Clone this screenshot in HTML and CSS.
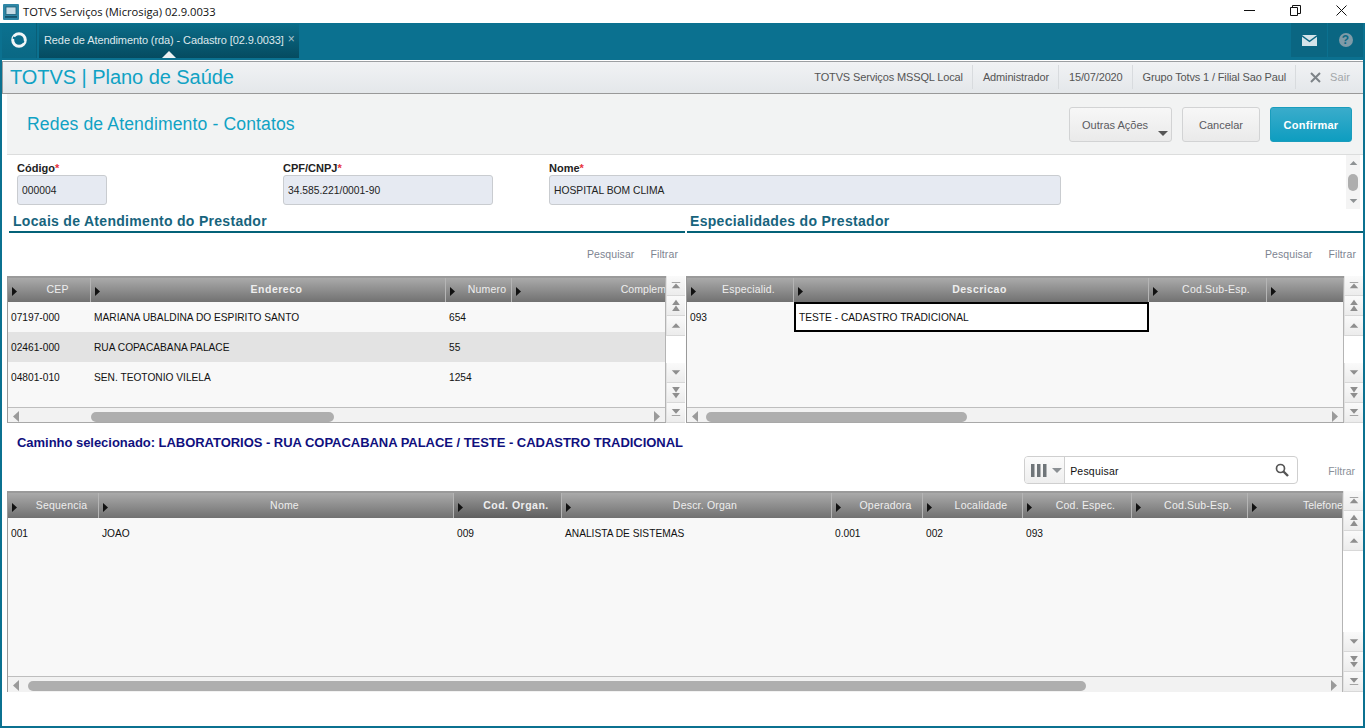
FILE: index.html
```html
<!DOCTYPE html>
<html lang="pt-BR">
<head>
<meta charset="utf-8">
<title>TOTVS Serviços (Microsiga) 02.9.0033</title>
<link rel="stylesheet" href="styles.css">
</head>
<body>
<svg class="defs" width="0" height="0" aria-hidden="true">
  <symbol id="first" viewBox="0 0 13 11"><path d="M1 1h11v1H1z"/><path d="M6.500 3L12 9H1z"/></symbol>
  <symbol id="pgup" viewBox="0 0 13 16"><path d="M6.500 .5L11.500 7.500h-10z"/><path d="M6.500 8L11.500 15h-10z"/></symbol>
  <symbol id="up" viewBox="0 0 13 8"><path d="M6.500 1L12 7H1z"/></symbol>
  <symbol id="down" viewBox="0 0 13 8"><path d="M1 1h11L6.500 7z"/></symbol>
  <symbol id="pgdn" viewBox="0 0 13 16"><path d="M1.500 1h10L6.500 8z"/><path d="M1.500 8.500h10L6.500 15.500z"/></symbol>
  <symbol id="last" viewBox="0 0 13 11"><path d="M1 1h11L6.500 7z"/><path d="M1 9h11v1H1z"/></symbol>
  <symbol id="left" viewBox="0 0 8 13"><path d="M7 1v11L1 6.500z"/></symbol>
  <symbol id="right" viewBox="0 0 8 13"><path d="M1 1v11l6-5.500z"/></symbol>
  <symbol id="mark" viewBox="0 0 7 11"><path d="M1 1l5 4.500L1 10z"/></symbol>
</svg>

<div class="titlebar">
  <svg class="app-icon" viewBox="0 0 16 16" width="16" height="16"><rect x="0" y="0" width="16" height="16" rx="1" fill="#2f87a6"/><rect x="3" y="3" width="10" height="7.500" fill="#c5dbe5" stroke="#1d5f78" stroke-width=".8"/><rect x="2" y="12" width="12" height="1.800" fill="#17536b"/></svg>
  <span class="title-text">TOTVS Serviços (Microsiga) 02.9.0033</span>
  <div class="win-controls">
    <svg width="46" height="23" viewBox="0 0 46 23"><path d="M17 10.500h11" stroke="#111" fill="none"/></svg>
    <svg width="46" height="23" viewBox="0 0 46 23"><path d="M17.500 7.500h7v8h-7zM19.500 7.500v-2h8v8h-3" stroke="#111" fill="none"/></svg>
    <svg width="46" height="23" viewBox="0 0 46 23"><path d="M17.500 5.500l10 10M27.500 5.500l-10 10" stroke="#111" fill="none"/></svg>
  </div>
</div>

<div class="frame">
  <div class="appbar">
    <div class="logo-cell">
      <svg width="18" height="18" viewBox="0 0 18 18"><circle cx="9" cy="9" r="6.300" fill="none" stroke="#f2f6f8" stroke-width="3"/><path d="M3 6.500L14 11" stroke="#0a6f8e" stroke-width="2.200"/></svg>
    </div>
    <div class="tab">
      <span class="tab-text">Rede de Atendimento (rda) - Cadastro [02.9.0033]</span>
      <span class="tab-close">×</span>
      <span class="tab-caret"></span>
    </div>
    <div class="bar-spacer"></div>
    <div class="bar-icon">
      <svg width="15" height="11" viewBox="0 0 15 11"><path d="M0 0h15L7.500 5.500z" fill="#d4e4ea"/><path d="M0 1.800v9.200h15V1.800L7.500 7.300z" fill="#d4e4ea"/></svg>
    </div>
    <div class="bar-icon help-cell"><span class="help">?</span></div>
  </div>

  <header class="topbar">
    <div class="brand">TOTVS | Plano de Saúde</div>
    <div class="topinfo">
      <span class="info first-info">TOTVS Serviços MSSQL Local</span>
      <span class="info">Administrador</span>
      <span class="info">15/07/2020</span>
      <span class="info">Grupo Totvs 1 / Filial Sao Paul</span>
      <span class="info exit">
        <svg width="11" height="11" viewBox="0 0 11 11"><path d="M1 1l9 9M10 1l-9 9" stroke="#7d8388" stroke-width="2" fill="none"/></svg>
        <span class="exit-text">Sair</span>
      </span>
    </div>
  </header>

  <main class="main">
    <div class="pagehead">
      <h1 class="pagetitle">Redes de Atendimento - Contatos</h1>
      <div class="actions">
        <button class="btn btn-more">Outras Ações<span class="btn-caret"></span></button>
        <button class="btn btn-cancel">Cancelar</button>
        <button class="btn btn-primary">Confirmar</button>
      </div>
    </div>

    <form class="form">
      <div class="fields">
        <div class="field f-code"><label class="lbl">Código<i>*</i></label><div class="input">000004</div></div>
        <div class="field f-cnpj"><label class="lbl">CPF/CNPJ<i>*</i></label><div class="input">34.585.221/0001-90</div></div>
        <div class="field f-name"><label class="lbl">Nome<i>*</i></label><div class="input">HOSPITAL BOM CLIMA</div></div>
      </div>
      <div class="form-scroll">
        <svg class="tri"><use href="#up"/></svg>
        <span class="form-thumb"></span>
        <svg class="tri"><use href="#down"/></svg>
      </div>
    </form>

    <div class="panels">
      <section class="panel panel-l">
        <h2 class="sec-title">Locais de Atendimento do Prestador</h2>
        <div class="links"><span>Pesquisar</span><span>Filtrar</span></div>
        <div class="grid grid-l">
          <div class="g-main">
            <div class="g-head cols-l">
              <div class="th ctr"><svg class="mk"><use href="#mark"/></svg>CEP</div>
              <div class="th ctr strong"><svg class="mk"><use href="#mark"/></svg>Endereco</div>
              <div class="th ctr"><svg class="mk"><use href="#mark"/></svg>Numero</div>
              <div class="th end"><svg class="mk"><use href="#mark"/></svg>Complem</div>
            </div>
            <div class="g-body">
              <div class="tr cols-l"><div class="td">07197-000</div><div class="td">MARIANA UBALDINA DO ESPIRITO SANTO</div><div class="td">654</div><div class="td"></div></div>
              <div class="tr cols-l alt"><div class="td">02461-000</div><div class="td">RUA COPACABANA PALACE</div><div class="td">55</div><div class="td"></div></div>
              <div class="tr cols-l"><div class="td">04801-010</div><div class="td">SEN. TEOTONIO VILELA</div><div class="td">1254</div><div class="td"></div></div>
            </div>
            <div class="hscroll">
              <svg class="arr" width="8" height="13"><use href="#left"/></svg>
              <div class="h-track"><span class="h-thumb thumb-l"></span></div>
              <svg class="arr" width="8" height="13"><use href="#right"/></svg>
            </div>
          </div>
          <div class="vscroll">
            <div class="vbtn"><svg><use href="#first"/></svg></div>
            <div class="vbtn"><svg><use href="#pgup"/></svg></div>
            <div class="vbtn"><svg><use href="#up"/></svg></div>
            <div class="vgap"></div>
            <div class="vbtn"><svg><use href="#down"/></svg></div>
            <div class="vbtn"><svg><use href="#pgdn"/></svg></div>
            <div class="vbtn"><svg><use href="#last"/></svg></div>
          </div>
        </div>
      </section>

      <section class="panel panel-r">
        <h2 class="sec-title">Especialidades do Prestador</h2>
        <div class="links"><span>Pesquisar</span><span>Filtrar</span></div>
        <div class="grid grid-r">
          <div class="g-main">
            <div class="g-head cols-r">
              <div class="th ctr"><svg class="mk"><use href="#mark"/></svg>Especialid.</div>
              <div class="th ctr strong"><svg class="mk"><use href="#mark"/></svg>Descricao</div>
              <div class="th ctr"><svg class="mk"><use href="#mark"/></svg>Cod.Sub-Esp.</div>
              <div class="th"><svg class="mk"><use href="#mark"/></svg></div>
            </div>
            <div class="g-body">
              <div class="tr cols-r"><div class="td">093</div><div class="td selected">TESTE - CADASTRO TRADICIONAL</div><div class="td"></div><div class="td"></div></div>
            </div>
            <div class="hscroll">
              <svg class="arr" width="8" height="13"><use href="#left"/></svg>
              <div class="h-track"><span class="h-thumb thumb-r"></span></div>
              <svg class="arr" width="8" height="13"><use href="#right"/></svg>
            </div>
          </div>
          <div class="vscroll">
            <div class="vbtn"><svg><use href="#first"/></svg></div>
            <div class="vbtn"><svg><use href="#pgup"/></svg></div>
            <div class="vbtn"><svg><use href="#up"/></svg></div>
            <div class="vgap"></div>
            <div class="vbtn"><svg><use href="#down"/></svg></div>
            <div class="vbtn"><svg><use href="#pgdn"/></svg></div>
            <div class="vbtn"><svg><use href="#last"/></svg></div>
          </div>
        </div>
      </section>
    </div>

    <div class="path">Caminho selecionado: LABORATORIOS - RUA COPACABANA PALACE / TESTE - CADASTRO TRADICIONAL</div>

    <div class="searchrow">
      <div class="search">
        <div class="cols-btn">
          <svg width="16" height="13" viewBox="0 0 16 13"><path d="M0 0h3.500v13H0zM6 0h3.500v13H6zM12 0h3.500v13H12z" fill="#6f7579"/></svg>
          <span class="cols-caret"></span>
        </div>
        <span class="search-text">Pesquisar</span>
        <svg class="magnifier" width="14" height="14" viewBox="0 0 14 14"><circle cx="5.500" cy="5.500" r="4" fill="none" stroke="#555" stroke-width="1.700"/><path d="M8.500 8.500l4.500 4.500" stroke="#555" stroke-width="2.400" fill="none"/></svg>
      </div>
      <span class="filter">Filtrar</span>
    </div>

    <div class="grid grid-b">
      <div class="g-main">
        <div class="g-head cols-b">
          <div class="th ctr"><svg class="mk"><use href="#mark"/></svg>Sequencia</div>
          <div class="th ctr"><svg class="mk"><use href="#mark"/></svg>Nome</div>
          <div class="th ctr strong sorted"><svg class="mk"><use href="#mark"/></svg>Cod. Organ.</div>
          <div class="th ctr"><svg class="mk"><use href="#mark"/></svg>Descr. Organ</div>
          <div class="th ctr"><svg class="mk"><use href="#mark"/></svg>Operadora</div>
          <div class="th ctr"><svg class="mk"><use href="#mark"/></svg>Localidade</div>
          <div class="th ctr"><svg class="mk"><use href="#mark"/></svg>Cod. Espec.</div>
          <div class="th ctr"><svg class="mk"><use href="#mark"/></svg>Cod.Sub-Esp.</div>
          <div class="th end"><svg class="mk"><use href="#mark"/></svg>Telefone</div>
        </div>
        <div class="g-body">
          <div class="tr cols-b"><div class="td">001</div><div class="td">JOAO</div><div class="td">009</div><div class="td">ANALISTA DE SISTEMAS</div><div class="td">0.001</div><div class="td">002</div><div class="td">093</div><div class="td"></div><div class="td"></div></div>
        </div>
        <div class="hscroll">
          <svg class="arr" width="8" height="13"><use href="#left"/></svg>
          <div class="h-track"><span class="h-thumb thumb-b"></span></div>
          <svg class="arr" width="8" height="13"><use href="#right"/></svg>
        </div>
      </div>
      <div class="vscroll">
        <div class="vbtn"><svg><use href="#first"/></svg></div>
        <div class="vbtn"><svg><use href="#pgup"/></svg></div>
        <div class="vbtn"><svg><use href="#up"/></svg></div>
        <div class="vgap"></div>
        <div class="vbtn"><svg><use href="#down"/></svg></div>
        <div class="vbtn"><svg><use href="#pgdn"/></svg></div>
        <div class="vbtn"><svg><use href="#last"/></svg></div>
      </div>
    </div>
  </main>
</div>
</body>
</html>
```

FILE: styles.css
```css
* { box-sizing: border-box; }
html, body { margin: 0; padding: 0; background: #fff; }
body {
  width: 1366px;
  height: 728px;
  overflow: hidden;
  font-family: "Liberation Sans", Arial, sans-serif;
  font-size: 11px;
  color: #111;
}
.defs { position: absolute; }

/* window title bar */
.titlebar { height: 23px; display: flex; align-items: center; padding-left: 3px; background: #fff; }
.app-icon { flex: none; }
.title-text { margin-left: 4px; font-family: "Open Sans", sans-serif; font-size: 11.200px; color: #111; }
.win-controls { margin-left: auto; display: flex; margin-right: 1px; }
.win-controls svg { display: block; }

/* frame */
.frame {
  width: 1365px;
  height: 705px;
  border: 2px solid #0b7190;
  border-top: 0;
  display: flex;
  flex-direction: column;
  background: #fff;
}
.appbar { height: 37px; flex: none; background: #0b7190; display: flex; align-items: flex-start; }
.logo-cell {
  width: 35px; height: 35px; display: flex; align-items: center; justify-content: center;
  background: linear-gradient(#0b7190, #0a6884);
  border-right: 1px solid #0a5f78;
  padding-bottom: 1px;
}
.tab {
  position: relative;
  margin-left: 2px; margin-top: 1px;
  width: 260px; height: 34px;
  background: linear-gradient(#0b6c88, #054b60);
  color: #dfe8ec;
  font-size: 11px;
  display: flex; align-items: center;
  padding: 0 0 2px 5px;
  white-space: nowrap;
}
.tab-text { letter-spacing: -0.1px; }
.tab-close { margin-left: 4px; color: #a9c3cd; font-size: 12px; line-height: 10px; padding-bottom: 3px; }
.tab-caret {
  position: absolute; left: 123px; bottom: 0;
  border-left: 7px solid transparent; border-right: 7px solid transparent; border-bottom: 7px solid #eef1f3;
}
.bar-spacer { flex: 1; }
.bar-icon {
  width: 36px; height: 34px; display: flex; align-items: center; justify-content: center;
  background: #0a6682; margin-left: 1px;
}
.help-cell { width: 35px; }
.help {
  width: 14px; height: 14px; border-radius: 50%; background: #7f9ba8; color: #0b6a86;
  font-weight: 700; font-size: 12px; line-height: 14px; text-align: center;
}

/* product header */
.topbar {
  height: 34px; flex: none;
  display: flex; align-items: stretch; justify-content: space-between;
  background: linear-gradient(#f1f3f5, #e4e7ea);
  border-top: 1px solid #fff;
  border-bottom: 1px solid #999;
  box-shadow: inset 0 1px 0 #9c9fa2, inset 1px 0 0 #9c9fa2;
}
.brand { font-size: 20px; color: #10a2c4; line-height: 32px; padding-left: 8px; letter-spacing: -0.05px; }
.topinfo { display: flex; align-items: center; color: #555; font-size: 11px; letter-spacing: -0.14px; height: 30px; margin-top: 1px; }
.info { padding: 0 9px 0 10px; height: 24px; line-height: 24px; border-left: 1px solid #d8dbde; white-space: nowrap; }
.first-info { border-left: 0; }
.exit { display: flex; align-items: center; width: 68px; padding-left: 14px; }
.exit-text { margin-left: 9px; color: #a3a7aa; letter-spacing: .1px; }

/* main */
.main { flex: 1; min-height: 0; padding-left: 5px; display: flex; flex-direction: column; }
.pagehead {
  height: 61px; flex: none;
  background: #f2f3f3; border-bottom: 1px solid #dcdddd;
  display: flex; align-items: flex-start; justify-content: space-between;
  padding: 13px 11px 0 20px;
}
.pagetitle { margin: 7px 0 0; font-size: 17.600px; font-weight: 400; color: #10a2c4; letter-spacing: 0.12px; line-height: 20px; }
.actions { display: flex; gap: 10px; }
.btn {
  height: 35px; border: 1px solid #d2d3d4; border-radius: 3px;
  background: linear-gradient(#f7f7f7, #eaeaea);
  font-family: inherit; font-size: 11px; color: #5a5a60;
  padding: 0; position: relative;
}
.btn-more { width: 103px; text-align: left; padding-left: 12px; }
.btn-caret {
  position: absolute; right: 3px; bottom: 5px;
  border-left: 5px solid transparent; border-right: 5px solid transparent; border-top: 5px solid #555;
}
.btn-cancel { width: 78px; }
.btn-primary {
  width: 82px; border-color: #1a9dbd; color: #fff; font-weight: 700; letter-spacing: .25px;
  background: linear-gradient(#3aaccb, #0e9dc0);
}

/* form */
.form { height: 55px; flex: none; display: flex; justify-content: space-between; padding: 0 3px 0 10px; }
.fields { display: grid; grid-template-columns: 266px 266px 512px; padding-top: 7px; }
.lbl { display: block; font-weight: 700; font-size: 11px; line-height: 13px; height: 13px; color: #222; }
.lbl i { color: #e8323c; font-style: normal; }
.input {
  height: 30px; line-height: 28px; padding: 1px 0 0 4px;
  background: #e6eaf2; border: 1px solid #c9ccd0; border-radius: 3px; color: #222; font-size: 10.300px;
}
.f-code .input { width: 90px; }
.f-cnpj .input { width: 210px; }
.f-name .input { width: 512px; }
.form-scroll {
  width: 14px; height: 54px; background: #f4f4f4;
  display: flex; flex-direction: column; align-items: center; justify-content: space-between;
  padding: 5px 0;
}
.form-thumb { width: 10px; height: 17px; border-radius: 5px; background: #aeaeae; margin-top: 1px; }
.tri { fill: #8e9294; display: block; width: 9px; height: 6px; }

/* panels */
.panels { display: grid; grid-template-columns: 679px 677px; flex: none; }
.panel { min-width: 0; }
.sec-title {
  margin: 0 0 0 2px; height: 23px; padding: 3px 0 0 4px;
  border-bottom: 2px solid #046278;
  font-size: 14px; line-height: 16px; color: #17647d; font-weight: 700; letter-spacing: 0.3px;
}
.panel-l .sec-title { margin-right: 1px; }
.panel-r .sec-title { margin: 0 0 0 1px; padding-left: 3px; }
.links {
  height: 43px; display: flex; justify-content: flex-end; align-items: center; gap: 16px;
  padding-right: 8px; padding-bottom: 1px; color: #7d8491; font-size: 10.500px; letter-spacing: .1px;
}
.panel-r .links { padding-right: 7px; }

/* data grids */
.grid { display: grid; border-top: 2px solid #9a9a9a; border-left: 1px solid #9a9a9a; border-bottom: 1px solid #a8a8a8; }
.grid-l { grid-template-columns: 658px 19px; height: 147px; width: 678px; }
.grid-r { grid-template-columns: 657px 19px; height: 147px; }
.grid-b { grid-template-columns: 1335px 20px; height: 201px; width: 1356px; border-bottom: 0; }
.g-main { min-width: 0; min-height: 0; display: flex; flex-direction: column; border-right: 1px solid #b4b4b4; overflow: hidden; }
.g-head {
  height: 24px; flex: none; display: grid;
  background: linear-gradient(#aaa, #717171);
  color: #eee; font-size: 10.500px; letter-spacing: .2px;
}
.grid-b .g-head { height: 25px; }
.grid-b .th { line-height: 25px; }
.grid-b .mk { top: 9px; }
.cols-l { grid-template-columns: 83px 355px 66px 154px; }
.cols-r { grid-template-columns: 107px 355px 118px 77px; }
.cols-b { grid-template-columns: 91px 355px 108px 270px 91px 100px 109px 116px 95px; }
.th {
  position: relative; line-height: 23px; white-space: nowrap; overflow: hidden;
  border-right: 1px solid #b5b5b5; padding: 0 3px 0 20px;
}
.th:last-child { border-right: 0; }
.ctr { text-align: center; }
.end { text-align: right; padding-right: 0; letter-spacing: .05px; }
.strong { font-weight: 700; letter-spacing: .5px; }
.sorted { background: linear-gradient(#9a9a9a, #5f5f5f); }
.mk { position: absolute; left: 3px; top: 8px; width: 7px; height: 11px; fill: #111; }
.g-body { flex: 1; min-height: 0; background: #f8f8f8; }
.tr { display: grid; height: 30px; align-items: stretch; }
.alt { background: #e3e3e3; }
.td { line-height: 30px; padding: 1px 0 0 3px; font-size: 10.200px; color: #111; white-space: nowrap; }
.selected { border: 2px solid #000; background: #fff; line-height: 26px; padding: 1px 0 0 3px; height: 30px; }
.hscroll {
  height: 15px; flex: none; background: #f2f2f2; border-top: 1px solid #bebebe;
  display: flex; align-items: center; padding: 3px 4px 0;
}
.grid-b .hscroll { height: 16px; padding-top: 2px; }
.arr { fill: #9a9a9a; flex: none; }
.h-track { flex: 1; height: 10px; margin: 0 2px; }
.h-thumb { display: block; height: 10px; border-radius: 5px; background: #aeaeae; }
.thumb-l { width: 243px; margin-left: 69px; }
.thumb-r { width: 261px; margin-left: 5px; }
.thumb-b { width: 1058px; margin-left: 6px; }
.vscroll { display: flex; flex-direction: column; background: #fff; margin-top: -2px; margin-bottom: -1px; }
.grid-b .vscroll { margin-bottom: 0; }
.vbtn {
  height: 20px; flex: none; display: flex; align-items: center; justify-content: center;
  background: linear-gradient(#fafafa, #ececec); border-bottom: 1px solid #d8d8d8; border-left: 1px solid #e2e2e2;
}
.vbtn svg { fill: #8e8e8e; display: block; width: 10px; height: 13px; }
.vgap { flex: 1; }

.path {
  height: 33px; flex: none; padding: 12px 0 0 10px;
  font-size: 13px; line-height: 16px; font-weight: 700; color: #10107e; white-space: nowrap; letter-spacing: -0.035px;
}
.searchrow { height: 35px; flex: none; display: flex; justify-content: flex-end; align-items: flex-start; padding-right: 8px; }
.search {
  width: 274px; height: 28px; display: flex; align-items: center;
  border: 1px solid #cfcfcf; border-radius: 4px; background: #fff; color: #111; font-size: 10.500px;
}
.cols-btn {
  width: 40px; height: 26px; flex: none; display: flex; align-items: center; padding-left: 6px;
  background: linear-gradient(#fbfbfb, #eeeeee); border-right: 1px solid #cfcfcf; border-radius: 3px 0 0 3px;
}
.cols-caret { margin-left: 5px; border-left: 5px solid transparent; border-right: 5px solid transparent; border-top: 5px solid #8b9094; }
.search-text { margin-left: 5px; flex: 1; letter-spacing: .2px; padding-top: 1px; }
.magnifier { margin-right: 8px; flex: none; }
.filter { margin-left: 30px; margin-top: 9px; color: #8a9098; font-size: 10.500px; }
```
